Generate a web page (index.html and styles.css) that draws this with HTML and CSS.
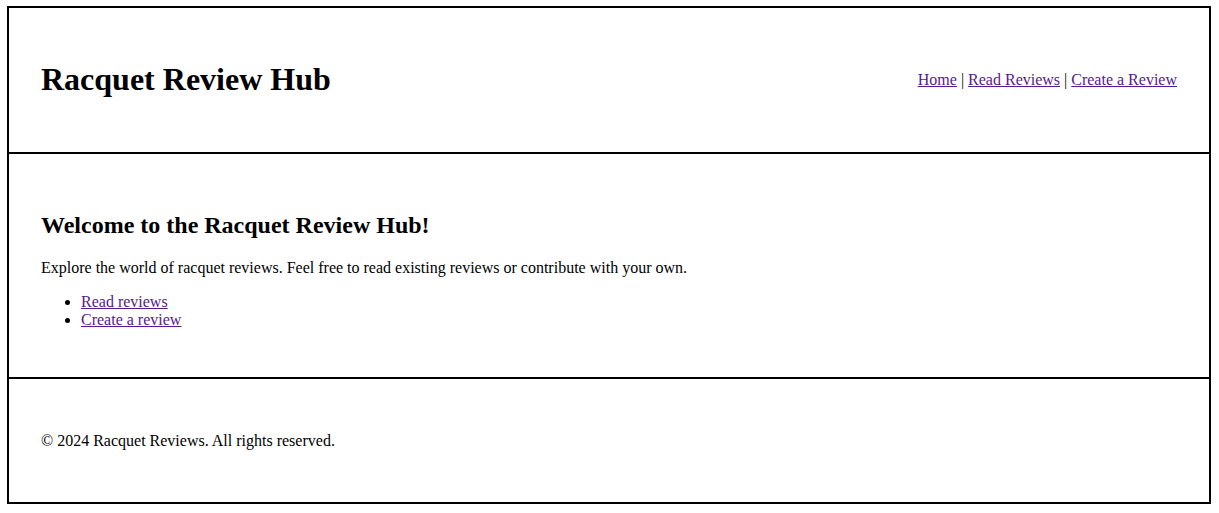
FILE: index.html
```html
<!DOCTYPE html>
<html lang="en">
<head>
<meta charset="utf-8">
<title>Racquet Review Hub</title>
<link rel="stylesheet" href="styles.css">
</head>
<body>
<div class="page">
  <header class="site-header">
    <h1 class="site-title">Racquet Review Hub</h1>
    <nav class="site-nav">
      <a href="#">Home</a> | <a href="#">Read Reviews</a> | <a href="#">Create a Review</a>
    </nav>
  </header>
  <main class="site-main">
    <h2 class="welcome-title">Welcome to the Racquet Review Hub!</h2>
    <p class="welcome-text">Explore the world of racquet reviews. Feel free to read existing reviews or contribute with your own.</p>
    <ul class="welcome-links">
      <li><a href="#">Read reviews</a></li>
      <li><a href="#">Create a review</a></li>
    </ul>
  </main>
  <footer class="site-footer">
    <p class="footer-text">&copy; 2024 Racquet Reviews. All rights reserved.</p>
  </footer>
</div>
</body>
</html>
```

FILE: styles.css
```css
html, body {
  margin: 0;
  padding: 0;
  background: #fff;
}

body {
  font-family: "Liberation Serif", "Times New Roman", serif;
  font-size: 16px;
  color: #000;
}

a {
  color: #551a8b;
  text-decoration: underline;
}

.page {
  margin: 6px 8px 9px 7px;
  border: 1px solid #000;
}

.site-header,
.site-main,
.site-footer {
  border: 1px solid #000;
}

.site-header {
  display: flex;
  justify-content: space-between;
  align-items: center;
  padding: 32px 32px;
}

.site-title {
  font-size: 32px;
  font-weight: bold;
  margin: 21.44px 0;
}

.site-nav {
  font-size: 16px;
}

.site-main {
  padding: 38px 32px 32px;
}

.welcome-title {
  font-size: 24px;
  font-weight: bold;
  margin: 19.92px 0;
}

.welcome-text {
  margin: 16px 0;
}

.welcome-links {
  margin: 16px 0;
  padding-left: 40px;
}

.site-footer {
  padding: 37px 32px 36px;
}

.footer-text {
  margin: 16px 0;
}
```
